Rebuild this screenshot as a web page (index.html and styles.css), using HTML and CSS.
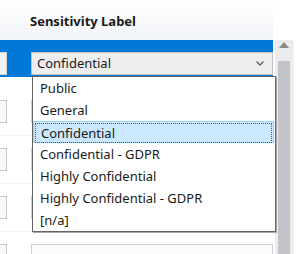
FILE: index.html
```html
<!DOCTYPE html>
<html>
<head>
<meta charset="utf-8">
<link rel="stylesheet" href="styles.css">
</head>
<body>
<div class="page">
  <div class="head-row">
    <div class="head-cell">Sensitivity Label</div>
  </div>
  <div class="body">
    <div class="rows">
      <div class="row selected">
        <div class="lcell"><div class="tbox"></div></div>
        <div class="ccell">
          <div class="combo">
            <span class="combo-text">Confidential</span>
            <svg class="chev" width="8" height="5" viewBox="0 0 8 5"><polyline points="0.5,0.5 4,4 7.5,0.5" fill="none" stroke="#606060" stroke-width="1.3"/></svg>
          </div>
        </div>
      </div>
      <div class="row">
        <div class="lcell"><div class="tbox"></div></div>
        <div class="ccell"><div class="combo plain"></div></div>
      </div>
      <div class="row">
        <div class="lcell"><div class="tbox"></div></div>
        <div class="ccell"><div class="combo plain"></div></div>
      </div>
      <div class="row">
        <div class="lcell"><div class="tbox"></div></div>
        <div class="ccell"><div class="combo plain"></div></div>
      </div>
      <div class="row">
        <div class="lcell"><div class="tbox"></div></div>
        <div class="ccell"><div class="combo plain"></div></div>
      </div>
      <ul class="list">
        <li class="item">Public</li>
        <li class="item">General</li>
        <li class="item active"><span class="focus">Confidential</span></li>
        <li class="item">Confidential - GDPR</li>
        <li class="item">Highly Confidential</li>
        <li class="item">Highly Confidential - GDPR</li>
        <li class="item">[n/a]</li>
      </ul>
    </div>
    <div class="scrollbar">
      <div class="sb-up">
        <svg width="10" height="6" viewBox="0 0 10 6"><polygon points="0,6 10,6 5,0" fill="#8a8a8a"/></svg>
      </div>
      <div class="sb-thumb"></div>
    </div>
  </div>
</div>
</body>
</html>
```
FILE: styles.css
```css
html, body {
  margin: 0;
  padding: 0;
  background: #ffffff;
}
.page {
  width: 301px;
  height: 254px;
  overflow: hidden;
  font-family: "Noto Sans", "Open Sans", sans-serif;
  font-size: 13px;
  color: #1a1a1a;
}
.head-row {
  padding-top: 16px;
  width: 273px;
}
.head-cell {
  height: 24px;
  background: linear-gradient(#ffffff, #f1f4f8);
  font-weight: bold;
  padding-left: 30px;
  box-sizing: border-box;
  line-height: 10px;
  margin-top: -16px;
  padding-top: 16px;
  height: 40px;
}
.body {
  display: flex;
}
.rows {
  position: relative;
  width: 275px;
}
.row {
  height: 48px;
  display: flex;
  border-bottom: 1px solid #f2f2f2;
  box-sizing: border-box;
  width: 273px;
}
.row.selected {
  background: #0078d7;
  height: 37px;
  border-bottom: none;
  margin-bottom: 11px;
}
.lcell {
  width: 31px;
  padding-top: 12px;
}
.tbox {
  width: 7px;
  height: 23px;
  background: #f7f7f7;
  border: 1px solid #c6c6c6;
  border-left: none;
  box-sizing: border-box;
}
.row.selected .tbox {
  background: #f3f3f3;
  border-color: #d8d8d8;
}
.ccell {
  flex: 1;
  padding-top: 12px;
}
.combo {
  height: 23px;
  box-sizing: border-box;
  border: 1px solid #c2c2c2;
  background: #ededed;
  display: flex;
  align-items: center;
  justify-content: space-between;
  padding: 0 8px 0 5px;
}
.combo.plain {
  background: #fbfbfb;
  border-color: #d0d0d0;
}
.combo-text {
  line-height: 21px;
}
.chev {
  display: block;
}
.list {
  position: absolute;
  left: 32px;
  top: 36px;
  width: 244px;
  margin: 0;
  padding: 0;
  list-style: none;
  background: #ffffff;
  border: 1px solid #646464;
  box-shadow: 1px 1px 0 #a8a8a8;
  box-sizing: border-box;
}
.item {
  height: 22px;
  line-height: 22px;
  padding-left: 7px;
  box-sizing: border-box;
  white-space: nowrap;
}
.item.active {
  background: #cce8ff;
  border: 1px solid #99d1ff;
  padding: 1px;
  margin-right: 1px;
}
.focus {
  display: block;
  height: 18px;
  line-height: 18px;
  border: 1px dotted #5a5a5a;
  padding-left: 5px;
}
.scrollbar {
  width: 18px;
  height: 214px;
  background: #ececef;
  border-right: 1px solid #f5f5f5;
}
.sb-up {
  height: 20px;
  display: flex;
  justify-content: center;
  padding-top: 2px;
  box-sizing: border-box;
}
.sb-up svg {
  display: block;
}
.sb-thumb {
  margin: 1px 3px 0 3px;
  height: 200px;
  background: #c3c4ca;
}
```
